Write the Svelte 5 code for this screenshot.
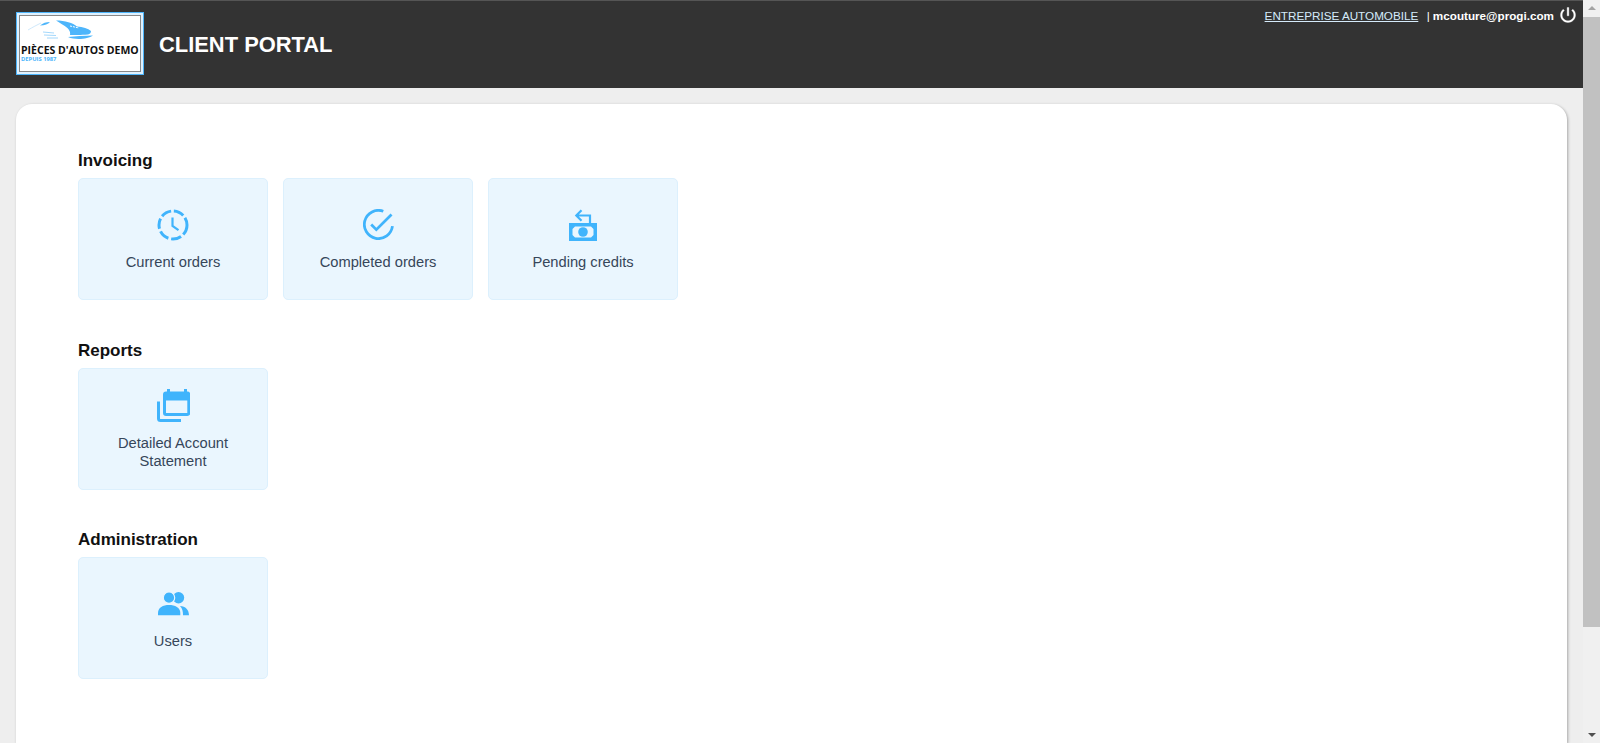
<script>
  const sections = [
    { title: 'Invoicing', cards: [
      { label: 'Current orders', icon: 'clock' },
      { label: 'Completed orders', icon: 'check' },
      { label: 'Pending credits', icon: 'money' }
    ]},
    { title: 'Reports', cards: [{ label: 'Detailed Account Statement', icon: 'calendar' }] },
    { title: 'Administration', cards: [{ label: 'Users', icon: 'users' }] }
  ];
</script>

<div class="page">
  <div class="main">
    <header class="header">
      <div class="logo">
        <div class="logo-inner">
          <svg class="car" viewBox="0 0 66 21" aria-hidden="true">
            <path d="M0 10 C5 7 9 5 13 3" class="car-faint" />
            <path d="M12 5.500 C15 3 18 2 22 2 C20 4 17 5.500 12 5.500Z" class="car-fill" />
            <path d="M28 0.500 C37 0.500 45 3 49 6.500 C55 7 60 8.500 63 11 C63 13 62 14 60 14.500 C52 15 48 15 42 15 C43 11 40 8 36 5.500 C33 4 31 2 28 0.500Z" class="car-fill" />
            <path d="M42 6 L51 8" class="car-gap" />
            <path d="M15 12 L26 13 M16 15 L28 15.500 M19 18 L30 18" class="car-line" />
            <path d="M40 17 C47 16 56 16 65 15.500 C60 19 48 20.500 40 17Z" class="car-fill" />
          </svg>
          <div class="logo-name">PIÈCES D'AUTOS DEMO</div>
          <div class="logo-since">DEPUIS 1987</div>
        </div>
      </div>
      <h1 class="title">CLIENT PORTAL</h1>
      <div class="user">
        <a class="company" href="#top">ENTREPRISE AUTOMOBILE</a>
        <span class="sep">|</span>
        <strong class="email">mcouture@progi.com</strong>
        <svg class="power" viewBox="0 0 24 24" aria-hidden="true">
          <path d="M13 3h-2v10h2V3zm4.830 2.170l-1.420 1.420C17.990 7.860 19 9.810 19 12c0 3.870-3.130 7-7 7s-7-3.130-7-7c0-2.190 1.010-4.140 2.580-5.420L6.170 5.170C4.230 6.820 3 9.260 3 12c0 4.970 4.030 9 9 9s9-4.030 9-9c0-2.740-1.230-5.180-3.170-6.830z"/>
        </svg>
      </div>
    </header>

    <div class="content">
      <main class="panel">
        {#each sections as section}
          <section class="section">
            <h2 class="heading">{section.title}</h2>
            <div class="cards">
              {#each section.cards as card}
                <div class="card">
                  <span class="icon-box">
                    {#if card.icon === 'clock'}
                      <svg class="icon clock" viewBox="0 0 32 32" aria-hidden="true">
                        <circle cx="16" cy="16" r="14" class="ring" pathLength="100" stroke-dasharray="12 3.2" />
                        <path d="M15.500 8.500V17l6 4.200" class="hand" />
                      </svg>
                    {:else if card.icon === 'check'}
                      <svg class="icon check" viewBox="2 2 20 20" aria-hidden="true">
                        <path class="thin" d="M21 13.100A9.100 9.100 0 1 1 15.100 3.450" />
                        <path class="thin" d="M7.300 12l3.300 3.300 9.800-9.800" />
                      </svg>
                    {:else if card.icon === 'money'}
                      <svg class="icon money" viewBox="0 0 28 32" aria-hidden="true">
                        <path d="M12.500 1.200 7.300 6.500l5.200 5.300M7.500 6.500H21V14" class="hand" />
                        <path class="fill" fill-rule="evenodd" d="M0 14h28v18H0zM6 17.500 3.500 20v6L6 28.500h16L24.500 26v-6L22 17.500z"/>
                        <circle class="fill" cx="14" cy="23" r="4.800"/>
                      </svg>
                    {:else if card.icon === 'calendar'}
                      <svg class="icon calendar" viewBox="0 0 33 33" aria-hidden="true">
                        <path d="M1.500 12.500V29.500a2 2 0 0 0 2 2H24" class="hand wide" />
                        <path class="fill" fill-rule="evenodd" d="M10 0h3v2.500h14V0h3v2.500h.300a3 3 0 0 1 3 3V24a3 3 0 0 1-3 3H9a3 3 0 0 1-3-3V5.500a3 3 0 0 1 3-3h1zM9 11.500V24h21.300V11.500z"/>
                      </svg>
                    {:else}
                      <svg class="icon users" viewBox="0 0 31 23.500" aria-hidden="true">
                        <circle class="fill" cx="20.500" cy="5.700" r="5.700"/>
                        <circle class="fill cut" cx="11" cy="5.700" r="5.700"/>
                        <path class="fill" d="M0 23.300V21C0 15.500 5 13 11 13s11.300 2.500 11.300 8v2.300z"/>
                        <path class="fill" d="M22 14C27.500 14 31 18 31 23.300h-6C25 19.500 24.500 16.500 22 14z"/>
                      </svg>
                    {/if}
                  </span>
                  <span class="label">{card.label}</span>
                </div>
              {/each}
            </div>
          </section>
        {/each}
      </main>
    </div>
  </div>

  <div class="scrollbar" aria-hidden="true">
    <span class="arrow up"></span>
    <span class="track"><span class="thumb"></span></span>
    <span class="arrow down"></span>
  </div>
</div>

<style>
  :global(body) {
    margin: 0;
    overflow: hidden;
    font-family: "Liberation Sans", Arial, sans-serif;
    background: #eeeeee;
  }
  .page {
    display: flex;
    height: 743px;
    overflow: hidden;
  }
  .main {
    flex: 1;
    min-width: 0;
    display: flex;
    flex-direction: column;
  }
  .header {
    flex: none;
    height: 88px;
    box-sizing: border-box;
    background: #333333;
    border-top: 1px solid #555;
    display: flex;
    align-items: flex-start;
    padding: 11px 5px 0 16px;
    color: #fff;
  }
  .logo {
    width: 128px;
    height: 63px;
    box-sizing: border-box;
    border: 1px solid #4db5fb;
    padding: 2px;
    background: #dff1fe;
    flex: none;
  }
  .logo-inner {
    height: 100%;
    box-sizing: border-box;
    border: 1px solid #888;
    background: #fff;
    padding: 4px 0 0 1px;
    overflow: hidden;
  }
  .car {
    display: block;
    width: 66px;
    height: 21px;
    margin-left: 7px;
  }
  .car-fill {
    fill: #4db5fb;
  }
  .car-faint {
    fill: none;
    stroke: #cfe9fc;
    stroke-width: 1;
  }
  .car-line {
    fill: none;
    stroke: #8ccdfa;
    stroke-width: 0.8;
  }
  .car-gap {
    fill: none;
    stroke: #fff;
    stroke-width: 1;
    stroke-dasharray: 2 1;
  }
  .logo-name {
    margin-top: 3px;
    font: 700 10.500px/12px "Open Sans", sans-serif;
    color: #111;
    white-space: nowrap;
  }
  .logo-since {
    font: 700 5.800px/7px "Open Sans", sans-serif;
    color: #4db5fb;
  }
  .title {
    margin: 20px 0 0 15px;
    font-size: 21.900px;
    line-height: 26px;
    font-weight: 700;
    color: #fff;
  }
  .user {
    margin-left: auto;
    margin-top: -7px;
    display: flex;
    align-items: center;
    height: 20px;
    font-size: 11.700px;
  }
  .company {
    color: #d5ebfb;
    text-decoration: underline;
    margin-right: 8.500px;
  }
  .sep {
    margin-right: 3px;
  }
  .email {
    font-weight: 700;
    margin-right: 4px;
  }
  .power {
    width: 20px;
    height: 20px;
    fill: #fff;
    stroke: #fff;
    stroke-width: 0.4;
  }
  .content {
    flex: 1;
    min-height: 0;
    padding: 16px 16px 0 16px;
  }
  .panel {
    height: 100%;
    box-sizing: border-box;
    background: #fff;
    border-radius: 16px 16px 0 0;
    box-shadow: 1px 1px 3px rgba(0, 0, 0, 0.3);
    padding: 47px 62px 0;
  }
  .section {
    margin-bottom: 40.500px;
  }
  .heading {
    margin: 0;
    height: 27px;
    font-size: 17px;
    line-height: 20px;
    font-weight: 700;
    color: #111;
  }
  .cards {
    display: flex;
    gap: 15px;
  }
  .card {
    width: 190px;
    height: 122px;
    box-sizing: border-box;
    border: 1px solid #dcf0fd;
    border-radius: 5px;
    background: #eaf6fe;
    display: flex;
    flex-direction: column;
    align-items: center;
    justify-content: center;
    gap: 12px;
    padding: 1px 20px 0;
    text-align: center;
    color: #36465a;
    font-size: 14.700px;
    line-height: 17.500px;
  }
  .icon-box {
    height: 35px;
    display: flex;
    align-items: center;
    justify-content: center;
  }
  .icon {
    display: block;
    fill: none;
  }
  .clock {
    width: 32px;
    height: 32px;
  }
  .check {
    width: 31px;
    height: 31px;
  }
  .money {
    width: 28px;
    height: 32px;
  }
  .calendar {
    width: 33px;
    height: 33px;
  }
  .users {
    width: 31px;
    height: 23.500px;
  }
  .fill {
    fill: #40b4fc;
  }
  .cut {
    stroke: #eaf6fe;
    stroke-width: 1.2;
  }
  .ring {
    fill: none;
    stroke: #40b4fc;
    stroke-width: 3;
  }
  .thin {
    fill: none;
    stroke: #40b4fc;
    stroke-width: 1.800;
  }
  .hand {
    fill: none;
    stroke: #40b4fc;
    stroke-width: 2.200;
  }
  .hand.wide {
    stroke-width: 3;
  }
  .scrollbar {
    flex: none;
    width: 17px;
    display: flex;
    flex-direction: column;
    background: #f0f0f0;
  }
  .arrow {
    flex: none;
    height: 17px;
    position: relative;
  }
  .arrow::after {
    content: "";
    position: absolute;
    left: 5px;
    border-left: 4px solid transparent;
    border-right: 4px solid transparent;
  }
  .arrow.up::after {
    top: 6px;
    border-bottom: 4px solid #a3a3a3;
  }
  .arrow.down::after {
    top: 7px;
    border-top: 4px solid #505050;
  }
  .track {
    flex: 1;
    display: block;
  }
  .thumb {
    display: block;
    height: 610px;
    background: #c1c1c1;
  }
</style>
